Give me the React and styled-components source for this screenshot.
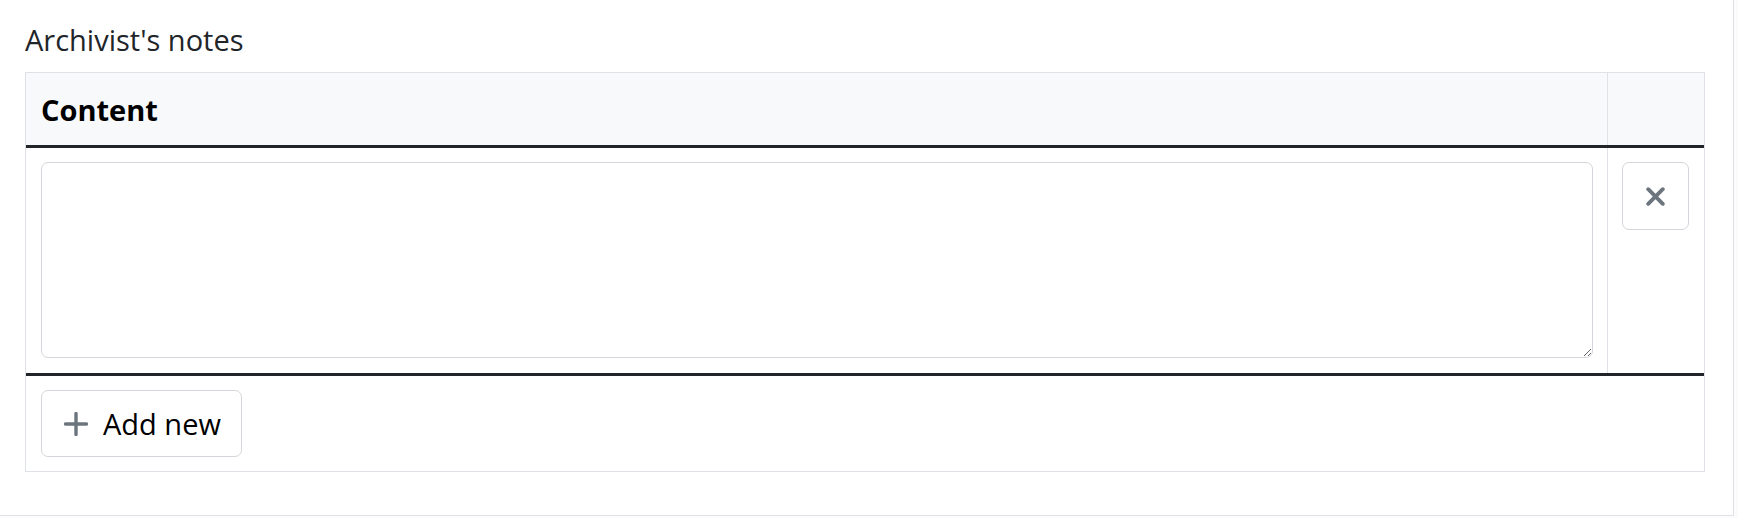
import React, { useState } from "react";
import styled, { createGlobalStyle } from "styled-components";

const GlobalStyle = createGlobalStyle`
  body {
    margin: 0;
    background: #fbfbfc;
    font-family: "Open Sans", "Noto Sans", sans-serif;
    color: #212529;
  }
`;

const PlusIcon = () => (
  <svg width="24" height="24" viewBox="0 0 24 24" fill="none">
    <path
      d="M12 1.5v21M1.5 12h21"
      stroke="#6c757d"
      strokeWidth="3.4"
      strokeLinecap="round"
    />
  </svg>
);

const CloseIcon = () => (
  <svg width="19" height="19" viewBox="0 0 19 19" fill="none">
    <path
      d="M2.2 2.2l14.6 14.6M16.8 2.2L2.2 16.8"
      stroke="#6c757d"
      strokeWidth="3.8"
      strokeLinecap="round"
    />
  </svg>
);

export default function App() {
  const [notes, setNotes] = useState([{ id: 1, content: "" }]);

  const addNote = () => {
    setNotes([...notes, { id: Date.now(), content: "" }]);
  };

  const removeNote = (id) => {
    setNotes(notes.filter((n) => n.id !== id));
  };

  const updateNote = (id, value) => {
    setNotes(notes.map((n) => (n.id === id ? { ...n, content: value } : n)));
  };

  return (
    <>
      <GlobalStyle />
      <Page>
        <Title>Archivist's notes</Title>
        <Table>
          <HeadRow>
            <HeadCell>Content</HeadCell>
            <HeadCell $side />
          </HeadRow>
          <Body>
            {notes.map((note) => (
              <Row key={note.id}>
                <Cell>
                  <NoteInput
                    value={note.content}
                    onChange={(e) => updateNote(note.id, e.target.value)}
                  />
                </Cell>
                <Cell $side>
                  <IconButton onClick={() => removeNote(note.id)}>
                    <CloseIcon />
                  </IconButton>
                </Cell>
              </Row>
            ))}
          </Body>
          <Footer>
            <AddButton onClick={addNote}>
              <PlusIcon />
              Add new
            </AddButton>
          </Footer>
        </Table>
      </Page>
    </>
  );
}

const Page = styled.div`
  box-sizing: border-box;
  width: 1734px;
  height: 516px;
  background: #fff;
  border-right: 1px solid #dee2e6;
  border-bottom: 1px solid #dee2e6;
  padding: 17px 28px 0 25px;
`;

const Title = styled.div`
  font-size: 29px;
  line-height: 45px;
  margin: 0 0 10px 0;
  color: #212529;
`;

const Table = styled.div`
  box-sizing: border-box;
  width: 1680px;
  border: 1px solid #dee2e6;
`;

const HeadRow = styled.div`
  display: grid;
  grid-template-columns: 1fr 97px;
  height: 72px;
  background: #f8f9fa;
`;

const HeadCell = styled.div`
  display: flex;
  align-items: center;
  padding: 0 15px;
  font-size: 29px;
  font-weight: 700;
  color: #000;
  border-left: ${({ $side }) => ($side ? "1px solid #dee2e6" : "none")};
`;

const Body = styled.div`
  border-top: 3px solid #212529;
  border-bottom: 3px solid #212529;
`;

const Row = styled.div`
  display: grid;
  grid-template-columns: 1fr 97px;
`;

const Cell = styled.div`
  box-sizing: border-box;
  display: flex;
  align-items: flex-start;
  padding: ${({ $side }) => ($side ? "14px 15px 15px 14px" : "14px 14px 15px 15px")};
  border-left: ${({ $side }) => ($side ? "1px solid #dee2e6" : "none")};
`;

const NoteInput = styled.textarea`
  box-sizing: border-box;
  display: block;
  width: 100%;
  height: 196px;
  margin: 0;
  padding: 8px 16px;
  border: 1px solid #d3d7db;
  border-radius: 7px;
  font-family: "Open Sans", "Noto Sans", sans-serif;
  font-size: 22px;
  color: #212529;
  background: #fff;
  outline: none;
`;

const IconButton = styled.button`
  box-sizing: border-box;
  width: 68px;
  height: 68px;
  display: flex;
  align-items: center;
  justify-content: center;
  padding: 0;
  background: #fff;
  border: 1px solid #d3d7db;
  border-radius: 7px;
  cursor: pointer;
`;

const Footer = styled.div`
  padding: 14px 15px 14px 15px;
`;

const AddButton = styled.button`
  box-sizing: border-box;
  height: 67px;
  display: flex;
  align-items: center;
  gap: 15px;
  padding: 0 20px 0 22px;
  white-space: nowrap;
  background: #fff;
  border: 1px solid #d3d7db;
  border-radius: 7px;
  font-family: "Open Sans", "Noto Sans", sans-serif;
  font-size: 29px;
  color: #000;
  cursor: pointer;
`;
